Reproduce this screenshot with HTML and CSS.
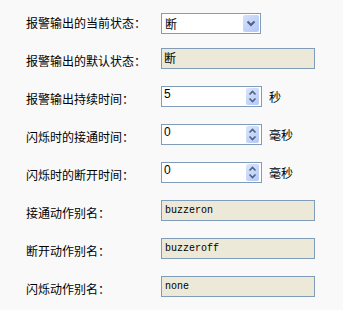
FILE: index.html
```html
<!DOCTYPE html>
<html lang="zh">
<head>
    <meta charset="UTF-8">
    <meta name="viewport" content="width=device-width, initial-scale=1.0">
    <title>报警输出</title>
    <link rel="stylesheet" href="styles.css">
</head>
<body>

<div class="form">
    <div class="row">
        <label class="label">报警输出的当前状态：</label>
        <div class="select">
            <span class="select-text">断</span>
            <span class="select-btn">
                <svg width="16" height="17" viewBox="0 0 16 17"><path d="M4.5 6.5 L8 10 L11.5 6.5" fill="none" stroke="#4d6185" stroke-width="2"/></svg>
            </span>
        </div>
    </div>

    <div class="row">
        <label class="label">报警输出的默认状态：</label>
        <input class="field" type="text" value="断" readonly>
    </div>

    <div class="row">
        <label class="label">报警输出持续时间：</label>
        <div class="spin">
            <input class="spin-input" type="text" value="5">
            <span class="spin-btn">
                <svg width="13" height="17" viewBox="0 0 13 17"><path d="M3.5 6.5 L6.5 3.5 L9.5 6.5 M3.5 10.5 L6.5 13.5 L9.5 10.5" fill="none" stroke="#4d6185" stroke-width="1.6"/></svg>
            </span>
        </div>
        <span class="unit">秒</span>
    </div>

    <div class="row">
        <label class="label">闪烁时的接通时间：</label>
        <div class="spin">
            <input class="spin-input" type="text" value="0">
            <span class="spin-btn">
                <svg width="13" height="17" viewBox="0 0 13 17"><path d="M3.5 6.5 L6.5 3.5 L9.5 6.5 M3.5 10.5 L6.5 13.5 L9.5 10.5" fill="none" stroke="#4d6185" stroke-width="1.6"/></svg>
            </span>
        </div>
        <span class="unit">毫秒</span>
    </div>

    <div class="row">
        <label class="label">闪烁时的断开时间：</label>
        <div class="spin">
            <input class="spin-input" type="text" value="0">
            <span class="spin-btn">
                <svg width="13" height="17" viewBox="0 0 13 17"><path d="M3.5 6.5 L6.5 3.5 L9.5 6.5 M3.5 10.5 L6.5 13.5 L9.5 10.5" fill="none" stroke="#4d6185" stroke-width="1.6"/></svg>
            </span>
        </div>
        <span class="unit">毫秒</span>
    </div>

    <div class="row">
        <label class="label">接通动作别名：</label>
        <input class="field field-mono" type="text" value="buzzeron" readonly>
    </div>

    <div class="row">
        <label class="label">断开动作别名：</label>
        <input class="field field-mono" type="text" value="buzzeroff" readonly>
    </div>

    <div class="row">
        <label class="label">闪烁动作别名：</label>
        <input class="field field-mono" type="text" value="none" readonly>
    </div>
</div>

</body>
</html>
```

FILE: styles.css
```css
body {
    margin: 0;
    padding: 10px 0 0 26px;
    background-color: #f9f9f9;
    font-family: "Noto Sans CJK SC", sans-serif;
    font-size: 12px;
    color: #000;
}
.row {
    display: flex;
    align-items: flex-start;
    height: 38px;
}
.label {
    width: 135px;
    line-height: 26px;
}
.select {
    display: flex;
    align-items: center;
    justify-content: space-between;
    box-sizing: border-box;
    width: 100px;
    height: 21px;
    margin-top: 3px;
    padding: 1px;
    border: 1px solid #7f9db9;
    background-color: #fff;
}
.select-text {
    padding-left: 2px;
    line-height: 17px;
}
.select-btn {
    display: flex;
    width: 16px;
    height: 17px;
    border-radius: 2px;
    background: linear-gradient(135deg, #d4e1fc, #b2c7f5);
}
.field {
    box-sizing: border-box;
    width: 154px;
    height: 21px;
    margin: 0;
    padding: 0 2px 2px;
    border: 1px solid #7f9db9;
    background-color: #ece9d8;
    font-family: "Noto Sans CJK SC", sans-serif;
    font-size: 12px;
    color: #000;
    outline: none;
}
.field-mono {
    padding: 0 2px 1px 3px;
    font-family: "Liberation Mono", monospace;
    font-size: 10px;
}
.spin {
    display: flex;
    box-sizing: border-box;
    width: 101px;
    height: 21px;
    padding: 1px;
    border: 1px solid #7f9db9;
    background-color: #fff;
}
.spin-input {
    flex: 1;
    min-width: 0;
    height: 12px;
    margin: 0;
    padding: 0 0 0 1px;
    border: none;
    background: transparent;
    font-family: "Liberation Sans", sans-serif;
    font-size: 12px;
    line-height: 12px;
    color: #000;
    outline: none;
}
.spin-btn {
    display: flex;
    width: 13px;
    height: 17px;
    margin-right: 1px;
    border-radius: 2px;
    background: linear-gradient(135deg, #dbe6fd, #b3c8f5);
}
.unit {
    margin-left: 7px;
    line-height: 21px;
}
```
